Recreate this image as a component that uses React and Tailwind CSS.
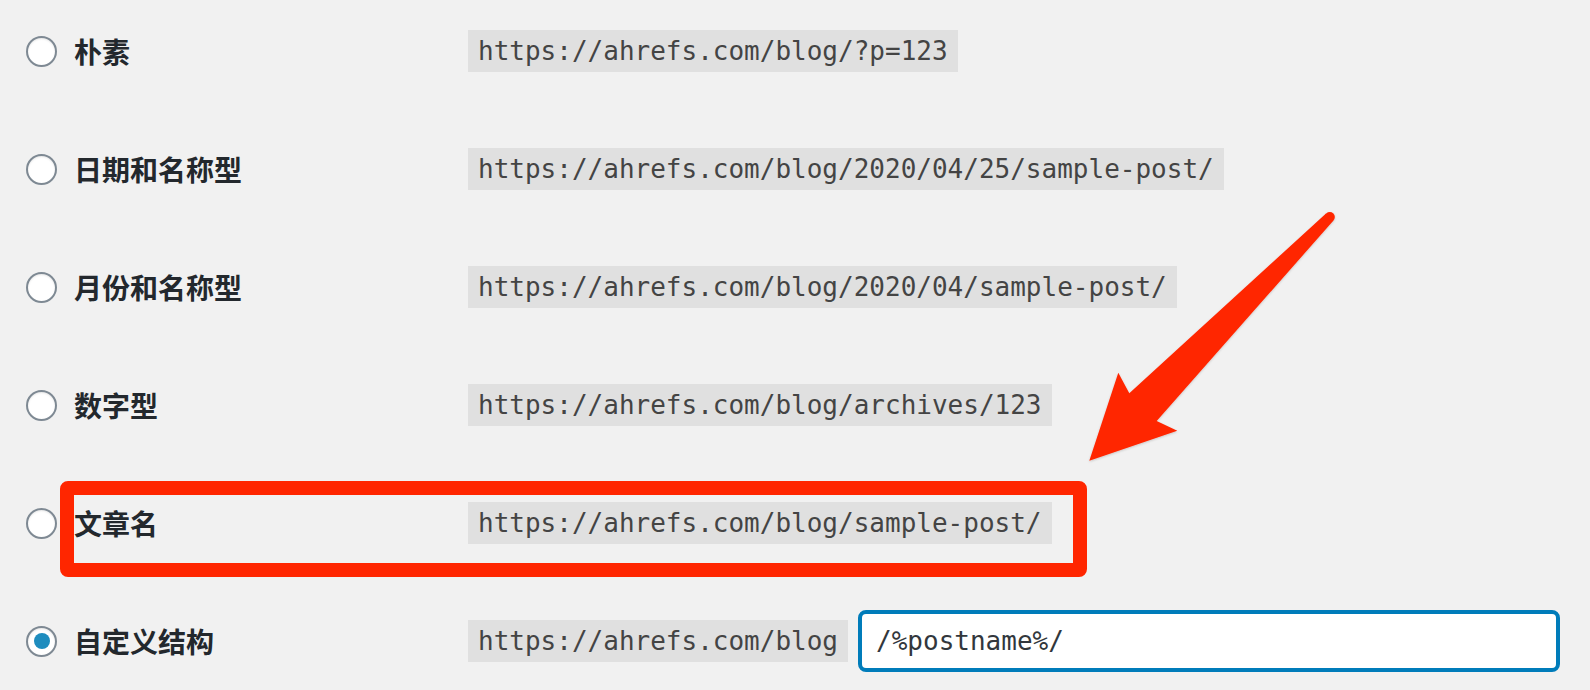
import React from 'react';

const rows = [
  { label: '朴素', url: 'https://ahrefs.com/blog/?p=123' },
  { label: '日期和名称型', url: 'https://ahrefs.com/blog/2020/04/25/sample-post/' },
  { label: '月份和名称型', url: 'https://ahrefs.com/blog/2020/04/sample-post/' },
  { label: '数字型', url: 'https://ahrefs.com/blog/archives/123' },
  { label: '文章名', url: 'https://ahrefs.com/blog/sample-post/' },
];

const Radio = ({ checked }) => (
  <span className="w-[31px] h-[31px] shrink-0 rounded-full bg-white border-2 border-[#7e8993] shadow-[inset_0_1px_2px_rgba(0,0,0,0.1)] flex items-center justify-center">
    {checked && <span className="w-[16px] h-[16px] rounded-full bg-[#1e8cbe]" />}
  </span>
);

const Code = ({ children }) => (
  <code className="bg-[#e0e0e0] text-[#444] px-[10px] py-[6px] text-[26px] leading-[30px] whitespace-nowrap font-['DejaVu_Sans_Mono',monospace]">
    {children}
  </code>
);

const Label = ({ checked, children }) => (
  <div className="w-[468px] shrink-0 flex items-center pl-[26px] gap-[17px]">
    <Radio checked={checked} />
    <span className="text-[28px] leading-[30px] font-bold text-[#23282d] font-['Noto_Sans_CJK_SC',sans-serif]">{children}</span>
  </div>
);

export default function App() {
  return (
    <div className="relative w-[1590px] h-[690px] overflow-hidden bg-[#f1f1f1]">
      <div className="flex flex-col gap-[76px] pt-[30px]">
        {rows.map((r) => (
          <div key={r.label} className="flex items-center h-[42px]">
            <Label>{r.label}</Label>
            <Code>{r.url}</Code>
          </div>
        ))}

        {/* 自定义结构 */}
        <div className="flex items-center h-[42px]">
          <Label checked>自定义结构</Label>
          <Code>https://ahrefs.com/blog</Code>
          <div className="ml-[10px] w-[702px] h-[62px] shrink-0 bg-white border-4 border-[#007cba] rounded-[8px] flex items-center pl-[14px]">
            <span className="text-[26px] leading-[30px] text-[#32373c] font-['DejaVu_Sans_Mono',monospace]">/%postname%/</span>
          </div>
        </div>
      </div>

      {/* annotation: red frame */}
      <div className="absolute left-[60px] top-[481px] w-[1027px] h-[96px] border-[14px] border-[#ff2600] rounded-[8px]" />

      {/* annotation: arrow */}
      <svg className="absolute left-0 top-0 pointer-events-none" width="1590" height="690" viewBox="0 0 1590 690">
        <defs>
          <filter id="sh" x="-10%" y="-10%" width="120%" height="120%">
            <feDropShadow dx="0" dy="1" stdDeviation="1.2" floodColor="#000" floodOpacity="0.18" />
          </filter>
        </defs>
        <g fill="#ff2600" filter="url(#sh)">
          <polygon points="1118.3,372.7 1129.3,393.3 1326,213.5 1333.5,220.5 1156.7,421 1177.3,430.7 1089.3,460.7" />
          <circle cx="1329.8" cy="217" r="5" />
        </g>
      </svg>
    </div>
  );
}
